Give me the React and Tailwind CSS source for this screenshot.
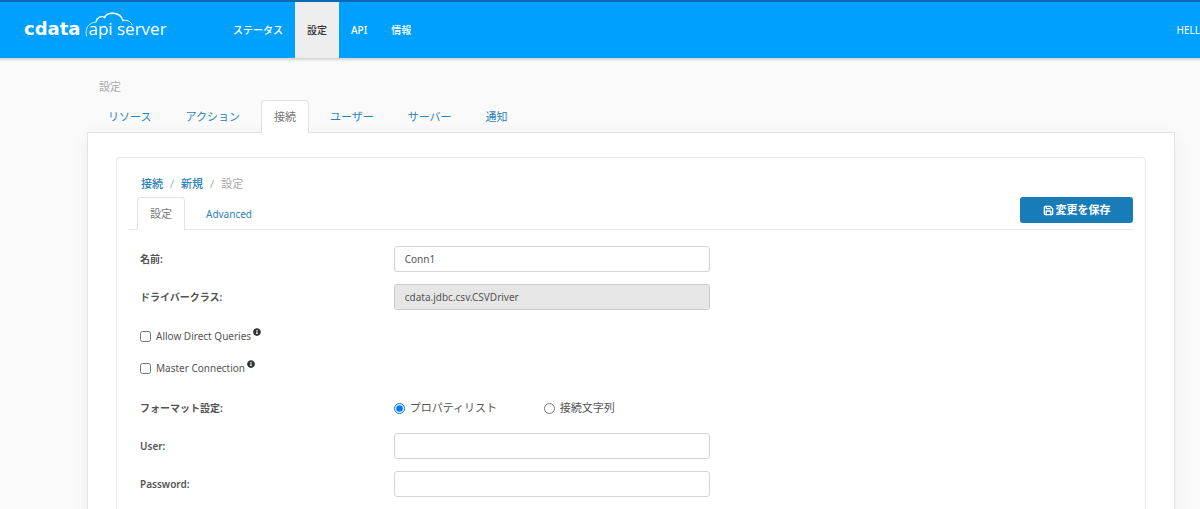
import { useState } from 'react';
import { Save } from 'lucide-react';
import { FaInfoCircle } from 'react-icons/fa';

const navItems = ['ステータス', '設定', 'API', '情報'];
const settingTabs = ['リソース', 'アクション', '接続', 'ユーザー', 'サーバー', '通知'];
const connectionTabs = ['設定', 'Advanced'];

function Logo() {
  return (
    <a href="#" className="flex items-center gap-2 text-white relative">
      <span className="font-['DejaVu_Sans',sans-serif] font-bold text-lg leading-6">cdata</span>
      <span className="font-['Open_Sans',sans-serif] text-[17px] leading-6">api server</span>
      <svg
        className="absolute left-[61px] -top-[7px] w-12 h-7"
        viewBox="0 0 48 28"
        fill="none"
        stroke="currentColor"
        strokeLinecap="round"
      >
        <path d="M1.500 26 C-0.500 18 4 12.500 11 12" strokeWidth="0.8" />
        <path d="M11 12 C12 7 16.500 5.500 20 7.500" strokeWidth="1.2" />
        <path d="M19.500 7.500 C22 1.500 35 1 38 10.500" strokeWidth="1.500" />
        <path d="M38 10.500 C42 9.500 46 11.500 47 14.500" strokeWidth="1" />
      </svg>
    </a>
  );
}

function Header() {
  return (
    <header className="flex items-stretch h-[58px] border-t-2 border-[#0a68b4] bg-[#00a0ff] shadow-[0_1px_2px_1px_rgba(0,0,0,0.15)] pl-6">
      <div className="flex items-center w-[197px] shrink-0 pb-[2px]">
        <Logo />
      </div>
      <nav className="flex flex-1 text-[10px] font-medium">
        {navItems.map((item) => (
          <a
            key={item}
            href="#"
            className={
              item === '設定'
                ? 'flex items-center px-3 bg-[#eeeeee] text-[#333333]'
                : 'flex items-center px-3 text-white'
            }
          >
            {item}
          </a>
        ))}
      </nav>
      <a href="#" className="flex items-center whitespace-nowrap text-[10px] text-white">
        HELL
      </a>
    </header>
  );
}

function Tabs({ items, active, onSelect }) {
  return (
    <div role="tablist" className="flex gap-2 pl-2 -mb-px">
      {items.map((item) => (
        <button
          key={item}
          type="button"
          role="tab"
          aria-selected={item === active}
          onClick={() => onSelect(item)}
          className={
            item === active
              ? 'h-[33px] px-3 rounded-t border border-b-0 border-[#e3e3e3] bg-white text-[#777777]'
              : 'h-[33px] px-3 border border-b-0 border-transparent text-[#2a82bd]'
          }
        >
          <span className={item === 'Advanced' ? 'text-[10px]' : 'text-[11px]'}>{item}</span>
        </button>
      ))}
    </div>
  );
}

function Field({ id, label, ...props }) {
  return (
    <div className="flex items-center mb-3">
      <label htmlFor={id} className="w-1/4 px-[11px] text-[10px] font-semibold">
        {label}
      </label>
      <div className="w-1/3 px-[11px]">
        <input
          id={id}
          className="block w-full h-[26px] px-[10px] rounded-[3px] border border-[#d4d4d4] bg-white text-[10px] disabled:bg-[#e6e6e6] disabled:border-[#cccccc]"
          {...props}
        />
      </div>
    </div>
  );
}

function CheckField({ label }) {
  return (
    <label className="flex items-center h-8 px-[11px] text-[10px]">
      <input type="checkbox" className="w-[11px] h-[11px] mr-[5px]" />
      {label}
      <FaInfoCircle className="w-2 h-2 ml-[2px] mb-2 text-[#333333]" />
    </label>
  );
}

export default function App() {
  const [tab, setTab] = useState('接続');
  const [subTab, setSubTab] = useState('設定');
  const [format, setFormat] = useState('list');

  return (
    <div className="h-screen overflow-hidden bg-[#fafafa] text-[11px] leading-4 text-[#555555] font-['Noto_Sans','Noto_Sans_CJK_JP',sans-serif]">
      <Header />
      <main className="pl-[87px] pr-[25px] pt-[21px]">
        <div className="pl-3 mb-[5px] text-[#aaaaaa]">設定</div>
        <div className="relative z-10">
          <Tabs items={settingTabs} active={tab} onSelect={setTab} />
        </div>
        <section className="border border-[#e3e3e3] bg-white px-7 pt-6 shadow-[0_4px_16px_rgba(0,0,0,0.05)]">
          <div className="border border-[#e8e8e8] rounded-[4px] px-3 pt-[18px] pb-8">
            <nav className="flex gap-[7px] h-4 mb-[5px] pl-3 text-[#aaaaaa]">
              <a href="#" className="text-[#2a82bd] font-medium">接続</a>
              <span>/</span>
              <a href="#" className="text-[#2a82bd] font-medium">新規</a>
              <span>/</span>
              <span>設定</span>
            </nav>
            <div className="flex justify-between items-start border-b border-[#e8e8e8] mb-4">
              <Tabs items={connectionTabs} active={subTab} onSelect={setSubTab} />
              <button
                type="button"
                className="flex items-center justify-center gap-[2px] w-[113px] h-[26px] rounded-[3px] bg-[#187cb8] text-white font-semibold"
              >
                <Save className="w-[11px] h-[11px]" strokeWidth={3} />
                変更を保存
              </button>
            </div>
            <form className="-mr-[11px]">
              <Field id="name" label="名前:" defaultValue="Conn1" />
              <Field id="driver" label="ドライバークラス:" defaultValue="cdata.jdbc.csv.CSVDriver" disabled />
              <div className="-mt-[2px] mb-[11px]">
                <CheckField label="Allow Direct Queries" />
                <CheckField label="Master Connection" />
              </div>
              <div role="radiogroup" aria-labelledby="format" className="flex items-center h-[26px] mb-3">
                <span id="format" className="w-1/4 px-[11px] text-[10px] font-semibold">
                  フォーマット設定:
                </span>
                <div className="flex w-1/3 px-[11px]">
                  <label className="flex items-center w-[150px] shrink-0">
                    <input
                      type="radio"
                      name="format"
                      className="w-[11px] h-[11px] mr-[5px]"
                      checked={format === 'list'}
                      onChange={() => setFormat('list')}
                    />
                    プロパティリスト
                  </label>
                  <label className="flex items-center shrink-0">
                    <input
                      type="radio"
                      name="format"
                      className="w-[11px] h-[11px] mr-[5px]"
                      checked={format === 'string'}
                      onChange={() => setFormat('string')}
                    />
                    接続文字列
                  </label>
                </div>
              </div>
              <Field id="user" label="User:" />
              <Field id="password" label="Password:" type="password" />
            </form>
          </div>
        </section>
      </main>
    </div>
  );
}
